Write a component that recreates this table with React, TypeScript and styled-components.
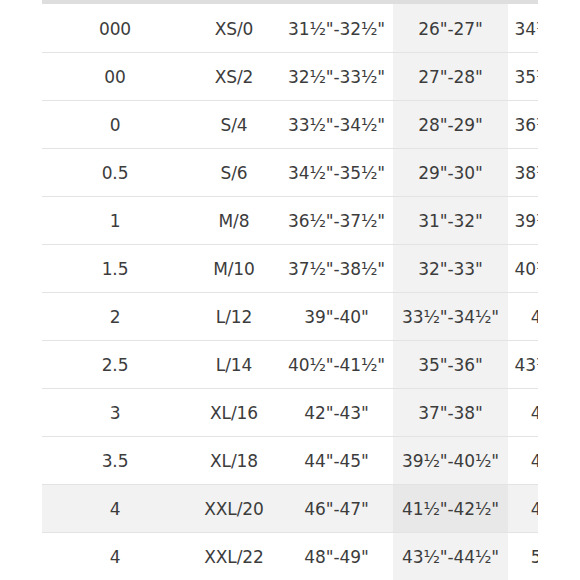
import React from 'react';
import styled, {createGlobalStyle} from 'styled-components';

const GlobalStyle = createGlobalStyle`
    html, body {
        margin: 0;
        padding: 0;
        background: #ffffff;
    }
    body {
        font-family: "DejaVu Sans", "Liberation Sans", sans-serif;
    }
`;

interface Size {
    numeric: string;
    letter: string;
    bust: string;
    waist: string;
    hip: string;
}

const sizes: Size[] = [
    {numeric: '000', letter: 'XS/0', bust: '31½"-32½"', waist: '26"-27"', hip: '34½"-35½"'},
    {numeric: '00', letter: 'XS/2', bust: '32½"-33½"', waist: '27"-28"', hip: '35½"-36½"'},
    {numeric: '0', letter: 'S/4', bust: '33½"-34½"', waist: '28"-29"', hip: '36½"-37½"'},
    {numeric: '0.5', letter: 'S/6', bust: '34½"-35½"', waist: '29"-30"', hip: '38½"-39½"'},
    {numeric: '1', letter: 'M/8', bust: '36½"-37½"', waist: '31"-32"', hip: '39½"-40½"'},
    {numeric: '1.5', letter: 'M/10', bust: '37½"-38½"', waist: '32"-33"', hip: '40½"-41½"'},
    {numeric: '2', letter: 'L/12', bust: '39"-40"', waist: '33½"-34½"', hip: '42"-43"'},
    {numeric: '2.5', letter: 'L/14', bust: '40½"-41½"', waist: '35"-36"', hip: '43½"-44½"'},
    {numeric: '3', letter: 'XL/16', bust: '42"-43"', waist: '37"-38"', hip: '45"-46"'},
    {numeric: '3.5', letter: 'XL/18', bust: '44"-45"', waist: '39½"-40½"', hip: '47"-48"'},
    {numeric: '4', letter: 'XXL/20', bust: '46"-47"', waist: '41½"-42½"', hip: '49"-50"'},
    {numeric: '4', letter: 'XXL/22', bust: '48"-49"', waist: '43½"-44½"', hip: '51"-52"'},
];

const columnWidths = [146, 92, 113, 115, 110];
const HIGHLIGHT_COLUMN = 3;
const HOVER_ROW = 10;

const Page = styled.div`
    padding-left: 42px;
`;

const Scroller = styled.div`
    width: 496px;
    overflow: hidden;
    border-top: 4px solid #dedede;
`;

const Table = styled.table`
    border-collapse: collapse;
    table-layout: fixed;
    width: ${columnWidths.reduce((a, b) => a + b, 0)}px;
`;

const Row = styled.tr<{$active: boolean}>`
    background: ${p => (p.$active ? '#f2f2f2' : 'transparent')};
    border-bottom: 1px solid #e3e3e3;
`;

const Cell = styled.td<{$highlight: boolean; $active: boolean}>`
    height: 48px;
    padding: 2px 0 0;
    box-sizing: border-box;
    text-align: center;
    vertical-align: middle;
    white-space: nowrap;
    overflow: hidden;
    font-size: 17px;
    color: #3c3c3c;
    letter-spacing: -0.1px;
    background: ${p => (p.$highlight ? (p.$active ? '#e8e8e8' : '#f2f2f2') : 'transparent')};
`;

export default function App() {
    return (
        <Page>
            <GlobalStyle />
            <Scroller>
                <Table>
                    <colgroup>
                        {columnWidths.map((w, i) => (
                            <col key={i} style={{width: w}} />
                        ))}
                    </colgroup>
                    <tbody>
                        {sizes.map((s, r) => {
                            const active = r === HOVER_ROW;
                            const values = [s.numeric, s.letter, s.bust, s.waist, s.hip];
                            return (
                                <Row key={r} $active={active}>
                                    {values.map((v, c) => (
                                        <Cell key={c} $highlight={c === HIGHLIGHT_COLUMN} $active={active}>
                                            {v}
                                        </Cell>
                                    ))}
                                </Row>
                            );
                        })}
                    </tbody>
                </Table>
            </Scroller>
        </Page>
    );
}
